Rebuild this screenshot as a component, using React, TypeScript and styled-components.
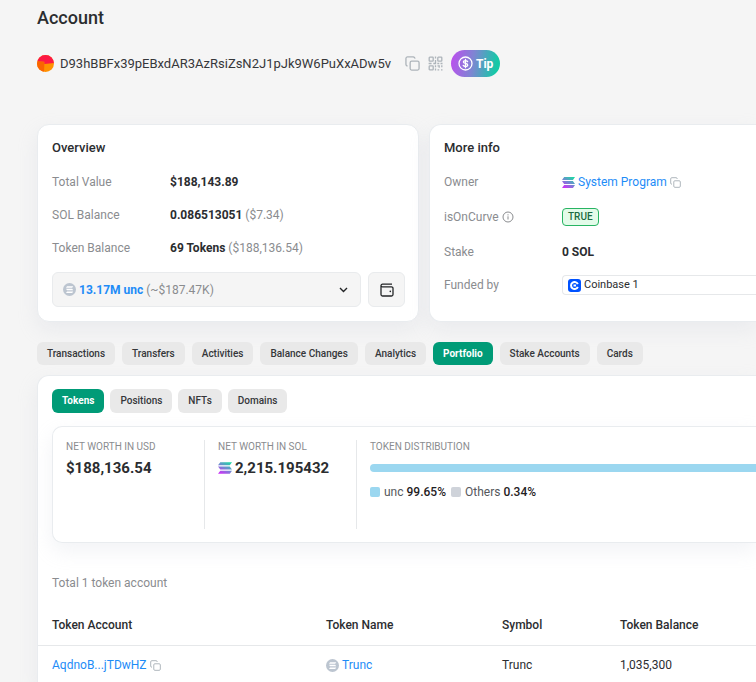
import React from "react";
import styled, { createGlobalStyle, css } from "styled-components";

const GlobalStyle = createGlobalStyle`
  *, *::before, *::after { box-sizing: border-box; }
  body {
    margin: 0;
    background: #f5f5f5;
    color: #2b2d30;
    font-family: Roboto, "Liberation Sans", sans-serif;
    font-size: 12px;
    line-height: 18px;
  }
  h1, h2, p, dl, dd { margin: 0; }
  button { font: inherit; color: inherit; cursor: pointer; }
  svg { display: block; flex: none; }
`;

const Page = styled.main`
  min-height: 100vh;
  padding-left: 37px;
  display: flex;
  flex-direction: column;
  overflow: hidden;
`;

const PageTitle = styled.h1`
  padding-top: 6px;
  font-size: 18px;
  font-weight: 500;
  line-height: 24px;
`;

const AddressBar = styled.div`
  display: flex;
  align-items: center;
  gap: 14px;
  margin: 20px 0 47px;
`;

const AddressGroup = styled.span`
  display: flex;
  align-items: center;
  gap: 6px;
`;

const AddressActions = styled.div`
  display: flex;
  align-items: center;
  gap: 8px;
`;

const Address = styled.span`
  font-size: 13px;
  line-height: 20px;
  color: #35373a;
`;

const IconButton = styled.button`
  display: inline-flex;
  padding: 0;
  border: 0;
  background: none;
  color: #adb4ba;
`;

const TipButton = styled.button`
  display: inline-flex;
  align-items: center;
  gap: 3px;
  height: 27px;
  padding: 0 7px;
  border: 0;
  border-radius: 14px;
  background: linear-gradient(100deg, #c04cf0 0%, #7d86d2 45%, #14c9a6 90%);
  color: #fff;
  font-weight: 700;
`;

const cardFrame = css`
  background: #fff;
  border: 1px solid #e9ecef;
  box-shadow: 0 8px 20px rgba(189, 197, 209, 0.2);
`;

const CardGrid = styled.section`
  display: grid;
  grid-template-columns: minmax(0, 382fr) minmax(0, 327fr);
  gap: 10px;
`;

const Card = styled.section<{ $bleed?: boolean }>`
  ${cardFrame}
  display: flex;
  flex-direction: column;
  padding: 14px 13px 14px 14px;
  border-radius: 12px;
  ${(p) =>
    p.$bleed &&
    css`
      padding-right: 0;
      border-right: 0;
      border-radius: 12px 0 0 12px;
    `}
`;

const CardTitle = styled.h2`
  font-size: 13px;
  font-weight: 500;
  line-height: 18px;
  margin-bottom: 16px;
`;

const Facts = styled.dl<{ $gap: number }>`
  display: flex;
  flex-direction: column;
  gap: ${(p) => p.$gap}px;
`;

const Fact = styled.div<{ $height?: number }>`
  display: grid;
  grid-template-columns: 118px minmax(0, 1fr);
  align-items: center;
  min-height: ${(p) => p.$height ?? 18}px;
`;

const FactName = styled.dt`
  display: flex;
  align-items: center;
  gap: 3px;
  color: #8a8c8f;
`;

const FactValue = styled.dd`
  display: flex;
  align-items: center;
  gap: 3px;
`;

const Strong = styled.strong`
  font-weight: 700;
`;

const Muted = styled.span`
  color: #8a8c8f;
`;

const Link = styled.a`
  color: #1e8cf7;
  text-decoration: none;
`;

const TrueBadge = styled.span`
  height: 18px;
  padding: 0 5px;
  border: 1px solid #28b463;
  border-radius: 4px;
  background: #e3fbe9;
  color: #1d6b41;
  font-size: 10px;
  font-weight: 500;
  line-height: 16px;
`;

const FunderTag = styled.div`
  flex: 1;
  display: flex;
  align-items: center;
  gap: 3px;
  height: 20px;
  padding-left: 5px;
  border: 1px solid #e6e8ea;
  border-right: 0;
  border-radius: 4px 0 0 4px;
  font-size: 11px;
`;

const TokenPicker = styled.div`
  display: flex;
  gap: 7px;
  margin-top: 15px;
`;

const fieldFrame = css`
  display: flex;
  align-items: center;
  height: 35px;
  border: 1px solid #e9ebed;
  border-radius: 6px;
  background: #f5f5f5;
`;

const TokenDropdown = styled.button`
  ${fieldFrame}
  flex: 1;
  gap: 3px;
  padding: 0 11px 0 10px;
  text-align: left;
`;

const DropdownValue = styled.span`
  flex: 1;
`;

const TokenAmount = styled.strong`
  color: #1e8cf7;
  font-weight: 700;
`;

const WalletButton = styled.button`
  ${fieldFrame}
  justify-content: center;
  width: 37px;
  padding: 0;
`;

const TabBar = styled.nav<{ $gap: number }>`
  display: flex;
  gap: ${(p) => p.$gap}px;
`;

const MainTabs = styled(TabBar)`
  margin: 20px 0 10px;
`;

const Tab = styled.button<{ $active?: boolean; $tall?: boolean }>`
  height: ${(p) => (p.$tall ? 24 : 23)}px;
  padding: 0 10px;
  border: 0;
  border-radius: 6px;
  background: ${(p) => (p.$active ? "#009b77" : "#e9e9e9")};
  color: ${(p) => (p.$active ? "#fff" : "#35373a")};
  font-size: 10px;
  font-weight: ${(p) => (p.$active ? 700 : 500)};
  white-space: nowrap;
`;

const Panel = styled.section`
  ${cardFrame}
  flex: 1;
  border-right: 0;
  border-bottom: 0;
  border-radius: 12px 0 0 0;
`;

const PanelTop = styled.div`
  padding: 13px 0 0 14px;
`;

const Summary = styled.div`
  ${cardFrame}
  display: flex;
  margin-top: 13px;
  padding: 13px 0 13px 13px;
  border-right: 0;
  border-radius: 10px 0 0 10px;
`;

const Metric = styled.div`
  width: 139px;
  min-height: 89px;
  margin-right: 13px;
  border-right: 1px solid #e6e8ea;
  white-space: nowrap;
`;

const Distribution = styled.div`
  flex: 1;
  min-width: 0;
`;

const MetricLabel = styled.p`
  color: #8a8c8f;
  font-size: 10px;
  line-height: 14px;
`;

const MetricValue = styled.p`
  display: flex;
  align-items: center;
  gap: 3px;
  margin-top: 4px;
  font-size: 15px;
  font-weight: 700;
  line-height: 20px;
`;

const DistributionBar = styled.div`
  height: 8px;
  margin: 10px 0 11px;
  border-radius: 4px 0 0 4px;
  background: #9bd7f0;
`;

const Legend = styled.div`
  display: flex;
  gap: 5px;
`;

const LegendItem = styled.span`
  display: flex;
  align-items: center;
  gap: 3px;
  color: #55585c;
`;

const Swatch = styled.i<{ $color: string }>`
  width: 10px;
  height: 10px;
  margin-right: 1px;
  border-radius: 2px;
  background: ${(p) => p.$color};
`;

const LegendValue = styled.span`
  color: #1f2123;
  font-weight: 500;
`;

const Count = styled.p`
  margin-top: 31px;
  color: #8a8c8f;
`;

const Table = styled.table`
  width: 100%;
  margin-top: 14px;
  border-collapse: collapse;
  table-layout: fixed;
`;

const HeadCell = styled.th<{ $width?: number }>`
  width: ${(p) => (p.$width ? `${p.$width}px` : "auto")};
  height: 39px;
  padding: 0 0 0 14px;
  border-bottom: 1px solid #e6e8ea;
  font-weight: 500;
  text-align: left;
`;

const Cell = styled.td`
  height: 40px;
  padding: 0 0 0 14px;
`;

const Inline = styled.span`
  display: flex;
  align-items: center;
  gap: 3px;
`;

const Avatar = () => (
  <svg width="17" height="17" viewBox="0 0 17 17" aria-hidden="true">
    <defs>
      <clipPath id="avatar-clip">
        <circle cx="8.500" cy="8.500" r="8.500" />
      </clipPath>
    </defs>
    <g clipPath="url(#avatar-clip)">
      <rect width="17" height="17" fill="#ff9100" />
      <path d="M0 6 7.500 6.800 7 17H0z" fill="#fa6400" />
      <path d="M0 0h17v8L7.400 9V6.800L0 6z" fill="#fc1944" />
    </g>
  </svg>
);

const CopyIcon = ({ size }: { size: number }) => (
  <svg width={size} height={size} viewBox="0 0 16 16" fill="none" stroke="currentColor" strokeWidth="1.4" aria-hidden="true">
    <rect x="5.500" y="5.500" width="9.500" height="9.500" rx="1.600" />
    <path d="M2.800 10.500A1.700 1.700 0 0 1 1 8.800V2.700A1.700 1.700 0 0 1 2.700 1h6.100a1.700 1.700 0 0 1 1.700 1.800" />
  </svg>
);

const QrIcon = () => (
  <svg width="15" height="15" viewBox="0 0 15 15" fill="none" stroke="currentColor" strokeWidth="1.300" aria-hidden="true">
    <rect x="1.200" y="1.200" width="4" height="4" rx=".6" />
    <rect x="9.800" y="1.200" width="4" height="4" rx=".6" />
    <rect x="1.200" y="9.800" width="4" height="4" rx=".6" />
    <path d="M7.500.6v2M7.500 4v3.500H5.300M.6 7.500h3M9.300 7.500h2M12.500 7.500h2M7.500 9.300v2M7.500 12.500v2M9.500 9.800h1.700v2M13.800 9.200v2M9.500 13.800h1.700M13 13.800h1.500" />
  </svg>
);

const DollarIcon = () => (
  <svg width="15" height="15" viewBox="0 0 15 15" fill="none" stroke="#fff" strokeWidth="1.300" strokeLinecap="round" aria-hidden="true">
    <circle cx="7.500" cy="7.500" r="6.500" />
    <path d="M9.600 5.600C9.200 4.900 8.500 4.600 7.500 4.600c-1.200 0-2.100.5-2.100 1.400 0 2 4.300.9 4.300 3 0 .9-.9 1.500-2.200 1.500-1.100 0-1.900-.4-2.300-1.100M7.500 3.300v8.400" />
  </svg>
);

const SolanaIcon = ({ id, size }: { id: string; size: number }) => (
  <svg width={size} height={size} viewBox="0 0 14 14" aria-hidden="true">
    <defs>
      <linearGradient id={id} gradientUnits="userSpaceOnUse" x1="11" y1="1" x2="4" y2="13">
        <stop offset="0" stopColor="#1fd6a5" />
        <stop offset=".5" stopColor="#6f8bd0" />
        <stop offset="1" stopColor="#c736f5" />
      </linearGradient>
    </defs>
    <path fill={`url(#${id})`} d="M2.300 1.200H14L11.800 4.200H0zM0 5.500h11.700L14 8.500H2.300zM2.300 9.800H14l-2.200 3H0z" />
  </svg>
);

const TokenIcon = () => (
  <svg width="13" height="13" viewBox="0 0 13 13" aria-hidden="true">
    <circle cx="6.500" cy="6.500" r="6.500" fill="#bcc5d0" />
    <path fill="#fff" d="M4 3.200h6.200l-1 1.500H3zM3 5.800h6.200l1 1.500H4zM4 8.400h6.200l-1 1.500H3z" />
  </svg>
);

const InfoIcon = () => (
  <svg width="12" height="12" viewBox="0 0 12 12" fill="none" stroke="#8a8c8f" aria-hidden="true">
    <circle cx="6" cy="6" r="5" />
    <path d="M6 5.300v3.200M6 3.300v1.100" />
  </svg>
);

const CoinbaseIcon = () => (
  <svg width="13" height="13" viewBox="0 0 13 13" aria-hidden="true">
    <rect width="13" height="13" rx="3" fill="#0052ff" />
    <path d="M9.800 5.200a3.500 3.500 0 1 0 0 2.600" fill="none" stroke="#fff" strokeWidth="2" />
    <rect x="5.500" y="5.500" width="2.500" height="2" fill="#fff" />
  </svg>
);

const ChevronIcon = () => (
  <svg width="11" height="11" viewBox="0 0 11 11" fill="none" stroke="#232527" strokeWidth="1.400" aria-hidden="true">
    <path d="m2 4 3.500 3.500L9 4" />
  </svg>
);

const WalletIcon = () => (
  <svg width="14" height="14" viewBox="0 0 14 14" fill="none" stroke="#232527" strokeWidth="1.300" aria-hidden="true">
    <path d="M12 1.200H2.500A1.500 1.500 0 0 0 1 2.700v8.800A1.500 1.500 0 0 0 2.500 13h9a1.500 1.500 0 0 0 1.500-1.500V5.300a1.500 1.500 0 0 0-1.500-1.500H2.500A1.300 1.300 0 0 1 1 2.700" />
    <circle cx="10.300" cy="8.400" r=".8" fill="#232527" stroke="none" />
  </svg>
);

const mainTabs = ["Transactions", "Transfers", "Activities", "Balance Changes", "Analytics", "Portfolio", "Stake Accounts", "Cards"];
const portfolioTabs = ["Tokens", "Positions", "NFTs", "Domains"];

export default function App() {
  return (
    <>
      <GlobalStyle />
      <Page>
        <PageTitle>Account</PageTitle>
        <AddressBar>
          <AddressGroup>
            <Avatar />
            <Address>D93hBBFx39pEBxdAR3AzRsiZsN2J1pJk9W6PuXxADw5v</Address>
          </AddressGroup>
          <AddressActions>
            <IconButton type="button" aria-label="Copy address"><CopyIcon size={15} /></IconButton>
            <IconButton type="button" aria-label="Show QR code"><QrIcon /></IconButton>
            <TipButton type="button"><DollarIcon />Tip</TipButton>
          </AddressActions>
        </AddressBar>

        <CardGrid>
          <Card>
            <CardTitle>Overview</CardTitle>
            <Facts $gap={15}>
              <Fact>
                <FactName>Total Value</FactName>
                <FactValue><Strong>$188,143.89</Strong></FactValue>
              </Fact>
              <Fact>
                <FactName>SOL Balance</FactName>
                <FactValue><Strong>0.086513051</Strong> <Muted>($7.34)</Muted></FactValue>
              </Fact>
              <Fact>
                <FactName>Token Balance</FactName>
                <FactValue><Strong>69 Tokens</Strong> <Muted>($188,136.54)</Muted></FactValue>
              </Fact>
            </Facts>
            <TokenPicker>
              <TokenDropdown type="button" aria-haspopup="listbox">
                <TokenIcon />
                <DropdownValue><TokenAmount>13.17M unc</TokenAmount> <Muted>(~$187.47K)</Muted></DropdownValue>
                <ChevronIcon />
              </TokenDropdown>
              <WalletButton type="button" aria-label="Open wallet"><WalletIcon /></WalletButton>
            </TokenPicker>
          </Card>

          <Card $bleed>
            <CardTitle>More info</CardTitle>
            <Facts $gap={14}>
              <Fact>
                <FactName>Owner</FactName>
                <FactValue>
                  <SolanaIcon id="sol-owner" size={13} />
                  <Link href="#system-program">System Program</Link>
                  <IconButton type="button" aria-label="Copy owner"><CopyIcon size={11} /></IconButton>
                </FactValue>
              </Fact>
              <Fact $height={24}>
                <FactName>isOnCurve <InfoIcon /></FactName>
                <FactValue><TrueBadge>TRUE</TrueBadge></FactValue>
              </Fact>
              <Fact>
                <FactName>Stake</FactName>
                <FactValue><Strong>0 SOL</Strong></FactValue>
              </Fact>
              <Fact $height={20}>
                <FactName>Funded by</FactName>
                <FactValue><FunderTag><CoinbaseIcon />Coinbase 1</FunderTag></FactValue>
              </Fact>
            </Facts>
          </Card>
        </CardGrid>

        <MainTabs $gap={7} aria-label="Account sections">
          {mainTabs.map((name) => (
            <Tab key={name} type="button" $active={name === "Portfolio"}>{name}</Tab>
          ))}
        </MainTabs>

        <Panel>
          <PanelTop>
            <TabBar $gap={6} aria-label="Portfolio sections">
              {portfolioTabs.map((name) => (
                <Tab key={name} type="button" $tall $active={name === "Tokens"}>{name}</Tab>
              ))}
            </TabBar>
            <Summary>
              <Metric>
                <MetricLabel>NET WORTH IN USD</MetricLabel>
                <MetricValue>$188,136.54</MetricValue>
              </Metric>
              <Metric>
                <MetricLabel>NET WORTH IN SOL</MetricLabel>
                <MetricValue><SolanaIcon id="sol-worth" size={14} />2,215.195432</MetricValue>
              </Metric>
              <Distribution>
                <MetricLabel>TOKEN DISTRIBUTION</MetricLabel>
                <DistributionBar />
                <Legend>
                  <LegendItem><Swatch $color="#9bd7f0" />unc <LegendValue>99.65%</LegendValue></LegendItem>
                  <LegendItem><Swatch $color="#cfd3da" />Others <LegendValue>0.34%</LegendValue></LegendItem>
                </Legend>
              </Distribution>
            </Summary>
            <Count>Total 1 token account</Count>
          </PanelTop>
          <Table>
            <thead>
              <tr>
                <HeadCell $width={274}>Token Account</HeadCell>
                <HeadCell $width={176}>Token Name</HeadCell>
                <HeadCell $width={118}>Symbol</HeadCell>
                <HeadCell>Token Balance</HeadCell>
              </tr>
            </thead>
            <tbody>
              <tr>
                <Cell>
                  <Inline>
                    <Link href="#token-account">AqdnoB...jTDwHZ</Link>
                    <IconButton type="button" aria-label="Copy token account"><CopyIcon size={11} /></IconButton>
                  </Inline>
                </Cell>
                <Cell><Inline><TokenIcon /><Link href="#trunc">Trunc</Link></Inline></Cell>
                <Cell>Trunc</Cell>
                <Cell>1,035,300</Cell>
              </tr>
            </tbody>
          </Table>
        </Panel>
      </Page>
    </>
  );
}
